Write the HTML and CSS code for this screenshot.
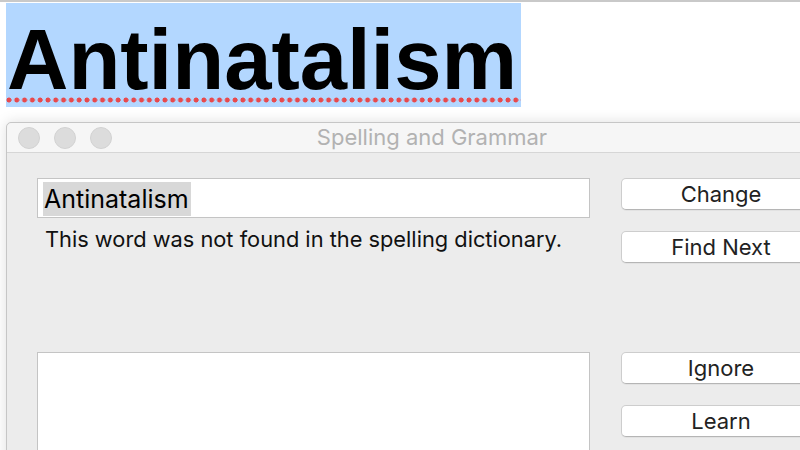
FILE: index.html
```html
<!DOCTYPE html>
<html lang="en">
<head>
    <meta charset="UTF-8">
    <title>Spelling and Grammar</title>
    <link rel="stylesheet" href="styles.css">
</head>
<body>
    <div class="doc">
        <span class="word">Antinatalism</span>
    </div>

    <div class="window">
        <div class="titlebar">
            <div class="lights">
                <span class="light"></span>
                <span class="light"></span>
                <span class="light"></span>
            </div>
            <div class="title">Spelling and Grammar</div>
        </div>

        <div class="content">
            <div class="left">
                <div class="field"><span class="found">Antinatalism</span></div>
                <p class="message">This word was not found in the spelling dictionary.</p>
                <div class="guesses"></div>
            </div>
            <div class="right">
                <button class="btn">Change</button>
                <button class="btn">Find Next</button>
                <button class="btn gap">Ignore</button>
                <button class="btn">Learn</button>
            </div>
        </div>
    </div>
</body>
</html>
```

FILE: styles.css
```css
body {
    margin: 0;
    background: #fff;
    overflow: hidden;
    height: 450px;
    border-top: 2px solid #c9c9c9;
    font-family: Inter, "Noto Sans", sans-serif;
}
.doc {
    padding: 1px 0 0 6px;
    height: 105px;
}
.word {
    display: inline-block;
    position: relative;
    background: #b3d7ff;
    font-family: "Liberation Sans", Arial, sans-serif;
    font-weight: bold;
    font-size: 85px;
    line-height: 95px;
    height: 95px;
    padding: 9px 4px 0 1px;
    color: #000;
}
.word::after {
    content: "";
    position: absolute;
    left: 0;
    right: 0;
    bottom: 4px;
    height: 6px;
    background: radial-gradient(circle at 3px 3px, #e8494c 2.2px, rgba(232, 73, 76, 0) 2.8px);
    background-size: 7.8px 6px;
}
.window {
    margin: 14px 0 0 6px;
    width: 850px;
    height: 340px;
    background: #ececec;
    border: 1px solid #c6c6c6;
    border-radius: 5px 0 0 0;
    box-shadow: 0 0 14px rgba(0, 0, 0, .13);
}
.titlebar {
    position: relative;
    height: 29px;
    background: #f6f6f6;
    border-bottom: 1px solid #d6d6d6;
    border-radius: 5px 0 0 0;
}
.lights {
    display: flex;
    gap: 14px;
    padding: 4px 0 0 11px;
}
.light {
    width: 20px;
    height: 20px;
    border-radius: 50%;
    background: #dcdcdc;
    border: 1px solid #d2d2d2;
}
.title {
    position: absolute;
    top: 0;
    left: 0;
    right: 0;
    text-align: center;
    line-height: 29px;
    font-size: 22px;
    color: #b2b2b2;
}
.content {
    display: grid;
    grid-template-columns: 553px 200px;
    column-gap: 31px;
    padding: 25px 0 0 30px;
}
.field {
    height: 40px;
    background: #fff;
    border: 1px solid #c4c4c4;
    padding: 3px 0 0 5px;
    box-sizing: border-box;
}
.found {
    display: inline-block;
    background: #d8d8d8;
    font-size: 25px;
    line-height: 34px;
    padding: 0 2px 0 1px;
    color: #000;
}
.message {
    margin: 8px 0 0 8px;
    font-size: 21.8px;
    line-height: 26px;
    color: #111;
}
.guesses {
    margin-top: 100px;
    height: 120px;
    background: #fff;
    border: 1px solid #c4c4c4;
}
.right {
    display: flex;
    flex-direction: column;
}
.btn {
    height: 32px;
    margin-bottom: 21px;
    background: #fff;
    border: 1px solid #cdcdcd;
    border-bottom-color: #b5b5b5;
    border-radius: 5px;
    font-family: inherit;
    font-size: 22px;
    color: #222;
    padding: 0;
    box-shadow: 0 1px 0 rgba(0, 0, 0, .04);
}
.gap {
    margin-top: 68px;
}
```
